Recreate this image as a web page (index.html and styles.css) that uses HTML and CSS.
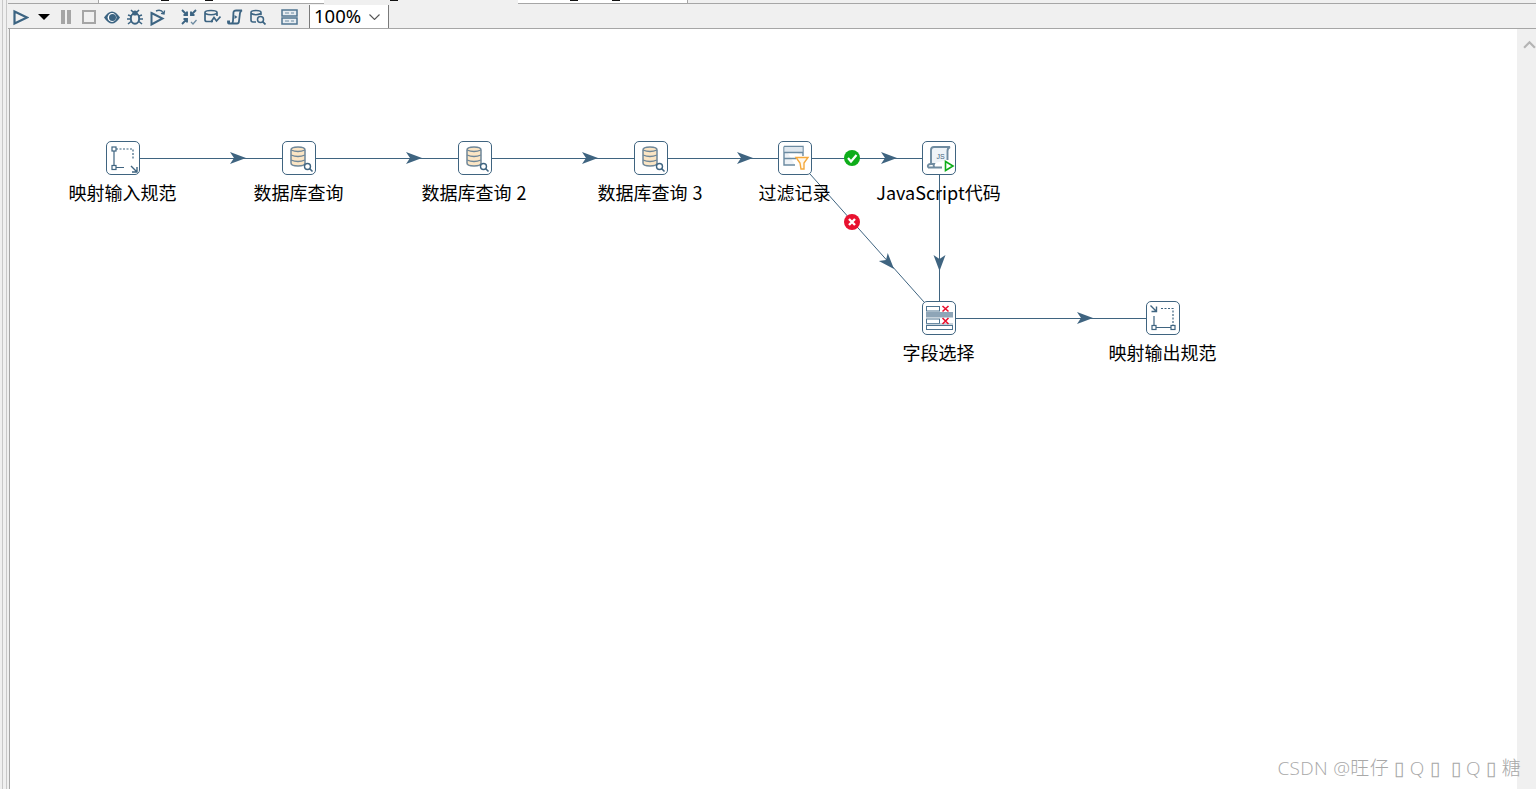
FILE: index.html
```html
<!DOCTYPE html>
<html lang="en">

<head>
    <meta charset="UTF-8">
    <title>Transformation</title>
    <link rel="stylesheet" href="styles.css">
</head>

<body>
    <div class="gutter"></div>

    <div class="workspace">
        <div class="tabstrip">
            <div class="tab-a"></div>
            <div class="tab-b"><span class="mark mark1"></span><span class="mark mark2"></span></div>
            <div class="tab-c"><span class="mark mark3"></span></div>
            <div class="tab-d"><span class="mark mark4"></span><span class="mark mark5"></span></div>
            <div class="tab-e"></div>
        </div>

        <div class="toolbar">
            <svg class="tb-run" viewBox="0 0 17 17"><path d="M2.500 2.500 L15 8.500 L2.500 14.500 Z" fill="none" stroke="#3c6482" stroke-width="2.200"/></svg>
            <svg class="tb-drop" viewBox="0 0 12 6"><path d="M0 0 H12 L6 6 Z" fill="#000"/></svg>
            <svg class="tb-pause" viewBox="0 0 12 14"><path d="M1 0 H5 V14 H1 Z M7 0 H11 V14 H7 Z" fill="#a5a5a5"/></svg>
            <svg class="tb-stop" viewBox="0 0 14 14"><rect x="1" y="1" width="12" height="12" fill="none" stroke="#a5a5a5" stroke-width="2"/></svg>
            <svg class="tb-eye" viewBox="0 0 16 13"><path d="M0 6.500 Q8 -5.500 16 6.500 Q8 18.500 0 6.500 Z" fill="#3c6482"/><circle cx="8" cy="6.500" r="4.400" fill="#fff"/><circle cx="8.500" cy="6.500" r="3.500" fill="#3c6482"/></svg>
            <svg class="tb-bug" viewBox="0 0 16 16"><ellipse cx="8" cy="9.500" rx="4.200" ry="5.200" fill="none" stroke="#3c6482" stroke-width="2"/><circle cx="8" cy="4" r="2.600" fill="#3c6482"/><path d="M4 1 L6 3 M12 1 L10 3 M1 6 L4 7 M15 6 L12 7 M0 10 H4 M16 10 H12 M1 15 L4 12.500 M15 15 L12 12.500" stroke="#3c6482" stroke-width="1.600" fill="none"/></svg>
            <svg class="tb-replay" viewBox="0 0 16 17"><path d="M1.500 4 L12.500 9.500 L1.500 15.500 Z" fill="none" stroke="#3c6482" stroke-width="2"/><path d="M6 2 Q11 0 13.500 4 M14.500 1.500 L14 5 L11 4.400" fill="none" stroke="#3c6482" stroke-width="1.400"/></svg>
            <svg class="tb-verify" viewBox="0 0 16 16"><path d="M1 1 L6 6 M6 2.500 V6 H2.500 M15 1 L10 6 M10 2.500 V6 H13.500 M1 15 L6 10 M6 13.500 V10 H2.500" fill="none" stroke="#3c6482" stroke-width="1.900"/><path d="M10 13 L12 15 L15.500 11" fill="none" stroke="#6d8ba1" stroke-width="1.300"/></svg>
            <svg class="tb-impact" viewBox="0 0 17 16"><path d="M9 12.500 H3 Q1 12.500 1 11 V3.500 Q1 1.500 7 1.500 Q13 1.500 13 3.500 V7 M1 4.500 Q7 7 13 4.500" fill="none" stroke="#3c6482" stroke-width="1.700"/><path d="M7 13 L10 8.500 L12.500 12 L16.500 7.500" fill="none" stroke="#3c6482" stroke-width="1.700"/></svg>
            <svg class="tb-sql" viewBox="0 0 16 16"><path d="M4.500 14.500 H2 Q0.800 14.500 1 12.500 H3 M4.500 14.500 Q6 14 6 12 L6.500 3 Q7 1.500 9 1.500 H15 Q13.500 2 13 4 L12 12 Q12 14.500 10 14.500 Z" fill="none" stroke="#3c6482" stroke-width="1.800"/><path d="M7.500 6 L10.500 8 L7.500 10 Z" fill="#3c6482"/></svg>
            <svg class="tb-explore" viewBox="0 0 16 16"><path d="M6 13 H3 Q1 13 1 11 V3.500 Q1 1.500 6 1.500 Q11 1.500 11 3.500 V6 M1 4.500 Q6 7 11 4.500" fill="none" stroke="#3c6482" stroke-width="1.600"/><circle cx="10.500" cy="10.500" r="3" fill="none" stroke="#3c6482" stroke-width="1.500"/><path d="M12.600 12.600 L15.500 15.500" stroke="#3c6482" stroke-width="1.800"/></svg>
            <svg class="tb-grid" viewBox="0 0 17 16"><rect x="1" y="1" width="15" height="6" fill="#e6ecf1" stroke="#4f7490" stroke-width="1.500"/><rect x="1" y="9" width="15" height="6" fill="#e6ecf1" stroke="#4f7490" stroke-width="1.500"/><path d="M4 4 H8 M10 4 H13 M4 12 H8 M10 12 H13" stroke="#6d8ba1"/></svg>
            <div class="zoom-box">
                <span class="zoom-val">100%</span>
                <svg class="zoom-arrow" viewBox="0 0 11 6"><path d="M0.500 0.500 L5.500 5.500 L10.500 0.500" fill="none" stroke="#555" stroke-width="1.100"/></svg>
            </div>
        </div>

        <div class="main">
            <div class="canvas">
                <svg class="edges" viewBox="0 0 1507 760">
                    <defs>
                        <path id="arrow" d="M-16 -6 L0 0 L-16 6 L-12 0 Z" fill="#3f6480"/>
                        <g id="dbicon">
                            <path d="M8 8 Q8 5 15 5 Q22 5 22 8 V21 Q22 24 15 24 Q8 24 8 21 Z" fill="#fbe5c4" stroke="#6f8799" stroke-width="1.500"/>
                            <path d="M8 8 Q15 11 22 8 M8 13 Q15 16 22 13 M8 18 Q15 21 22 18" fill="none" stroke="#6f8799" stroke-width="1.300"/>
                            <circle cx="24.500" cy="24.500" r="3" fill="#fff" stroke="#3f6480" stroke-width="1.400"/>
                            <path d="M26.500 26.500 L29.500 29.500" stroke="#3f6480" stroke-width="1.600"/>
                        </g>
                    </defs>
                    <g class="edge">
                        <path d="M130 129 H770"/>
                        <path d="M802 129 H929.500 V289"/>
                        <path d="M800 145 L914 273" class="thin"/>
                        <path d="M929.500 289 H1140"/>
                    </g>
                    <use href="#arrow" transform="translate(236 129)"/>
                    <use href="#arrow" transform="translate(412 129)"/>
                    <use href="#arrow" transform="translate(588 129)"/>
                    <use href="#arrow" transform="translate(743 129)"/>
                    <use href="#arrow" transform="translate(887 129)"/>
                    <use href="#arrow" transform="translate(929.500 242) rotate(90)"/>
                    <use href="#arrow" transform="translate(884 240) rotate(48)"/>
                    <use href="#arrow" transform="translate(1083 289)"/>

                    <circle cx="842" cy="129" r="8" fill="#0ead1a"/>
                    <path d="M838 129 L841 132.500 L846.500 126" fill="none" stroke="#fff" stroke-width="2.200"/>
                    <circle cx="842" cy="193" r="8" fill="#e8112f"/>
                    <path d="M839 190 L845 196 M845 190 L839 196" fill="none" stroke="#fff" stroke-width="2.400"/>
                </svg>

                <div class="node node-in">
                    <svg viewBox="0 0 32 32"><path d="M7 9 V25 M9 25.500 H17" stroke="#3f6480" stroke-width="1.200" fill="none"/><path d="M9 7 H26 V18" stroke="#3f6480" stroke-width="1.200" stroke-dasharray="2 1.500" fill="none"/><rect x="5" y="5" width="4" height="4" fill="#fff" stroke="#3f6480" stroke-width="1.200"/><rect x="5" y="23.500" width="4" height="4" fill="#fff" stroke="#3f6480" stroke-width="1.200"/><path d="M24 24 L30 30 M30 25 V30 H25" fill="none" stroke="#3f6480" stroke-width="1.400"/></svg>
                </div>
                <div class="label label-in">映射输入规范</div>

                <div class="node node-db1">
                    <svg viewBox="0 0 32 32"><use href="#dbicon"/></svg>
                </div>
                <div class="label label-db1">数据库查询</div>

                <div class="node node-db2">
                    <svg viewBox="0 0 32 32"><use href="#dbicon"/></svg>
                </div>
                <div class="label label-db2">数据库查询 2</div>

                <div class="node node-db3">
                    <svg viewBox="0 0 32 32"><use href="#dbicon"/></svg>
                </div>
                <div class="label label-db3">数据库查询 3</div>

                <div class="node node-filter">
                    <svg viewBox="0 0 32 32"><path d="M5 4.500 H24 V14 M5 4.500 V23 H16" fill="#eef2f6" stroke="#6b8aa1" stroke-width="1.400"/><path d="M5.500 5 H23.500 V10 H5.500 Z" fill="#dfe7ee"/><path d="M5 10.500 H24 M5 16.500 H17" stroke="#6b8aa1" stroke-width="1.400"/><path d="M17 15.500 H29 L25 21 V27 H22 L21 21 Z" fill="#fff8ec" stroke="#f5a93c" stroke-width="1.400"/></svg>
                </div>
                <div class="label label-filter">过滤记录</div>

                <div class="node node-js">
                    <svg viewBox="0 0 32 32"><path d="M8 22 V8 Q8 5 11 5 H27 Q24.500 6 24.500 9 V18" fill="#eef3f7" stroke="#6f8ba0" stroke-width="1.900"/><path d="M5 25.500 Q4 22 8 22 H11 Q10 24 11.500 25.500 H19 M5 25.500 H11.500" fill="#fff" stroke="#6f8ba0" stroke-width="1.900"/><text x="13.500" y="17" class="js-text">JS</text><path d="M22.500 19.500 L30 24 L22.500 28.500 Z" fill="#fff" stroke="#0ead1a" stroke-width="1.600"/></svg>
                </div>
                <div class="label label-js">JavaScript代码</div>

                <div class="node node-select">
                    <svg viewBox="0 0 32 32"><rect x="3.500" y="4.500" width="13" height="4.500" fill="#fff" stroke="#4f7490"/><rect x="3" y="10" width="27" height="5.500" fill="#8ea5b7"/><rect x="3.500" y="17" width="13" height="4.500" fill="#fff" stroke="#4f7490"/><rect x="3" y="21.500" width="27" height="1" fill="#8ea5b7"/><rect x="3.500" y="23.500" width="26" height="4" fill="#fff" stroke="#4f7490"/><path d="M19.500 4 L25.500 9.500 M25.500 4 L19.500 9.500 M19.500 16 L25.500 22 M25.500 16 L19.500 22" stroke="#e8112f" stroke-width="1.600"/></svg>
                </div>
                <div class="label label-select">字段选择</div>

                <div class="node node-out">
                    <svg viewBox="0 0 32 32"><path d="M7 14 V24 M9 25.500 H24" stroke="#3f6480" stroke-width="1.200" fill="none"/><path d="M14 6.500 H26 V23" stroke="#3f6480" stroke-width="1.200" stroke-dasharray="2 1.500" fill="none"/><rect x="5" y="23.500" width="4" height="4" fill="#fff" stroke="#3f6480" stroke-width="1.200"/><rect x="24" y="23.500" width="4" height="4" fill="#fff" stroke="#3f6480" stroke-width="1.200"/><path d="M3.500 3.500 L9.500 9.500 M9.500 4.500 V9.500 H4.500" fill="none" stroke="#3f6480" stroke-width="1.400"/></svg>
                </div>
                <div class="label label-out">映射输出规范</div>
            </div>
            <div class="scrollbar">
                <svg class="scroll-up" viewBox="0 0 12 8"><path d="M1 7 L6 2 L11 7" fill="none" stroke="#b4b4b4" stroke-width="2"/></svg>
            </div>
        </div>
    </div>

    <div class="watermark">CSDN @旺仔 ▯ Q ▯ &nbsp;▯ Q ▯ 糖</div>
</body>

</html>
```

FILE: styles.css
```css
html,
body {
    margin: 0;
    height: 100%;
    overflow: hidden;
}

body {
    display: flex;
    background: #f0f0f0;
    font-family: "Noto Sans CJK SC", "Liberation Sans", sans-serif;
    position: relative;
}

.gutter {
    width: 8px;
    flex: none;
    background: linear-gradient(to right, #f0f0f0 0 2px, #c8c8c8 2px 3px, #f0f0f0 3px 6px, #c8c8c8 6px 7px, #f0f0f0 7px);
}

.workspace {
    flex: 1;
    min-width: 0;
    display: flex;
    flex-direction: column;
}

.tabstrip {
    display: flex;
    height: 4px;
    flex: none;
}

.tab-a {
    width: 90px;
    border-bottom: 1px solid #a6a6a6;
}

.tab-b {
    width: 225px;
    background: #fff;
    border-left: 1px solid #a6a6a6;
    border-bottom: 1px solid #a6a6a6;
    position: relative;
}

.tab-c {
    width: 194px;
    position: relative;
}

.tab-d {
    width: 169px;
    background: #fff;
    border-bottom: 1px solid #a6a6a6;
    border-right: 1px solid #a6a6a6;
    position: relative;
}

.tab-e {
    flex: 1;
    border-bottom: 1px solid #a6a6a6;
}

.mark {
    position: absolute;
    top: 0;
    width: 8px;
    height: 1px;
    background: #111;
}

.mark1 { left: 62px; }
.mark2 { left: 106px; }
.mark3 { left: 66px; }
.mark4 { left: 52px; }
.mark5 { left: 94px; }

.toolbar {
    box-sizing: border-box;
    height: 25px;
    flex: none;
    padding-top: 2px;
    display: flex;
    align-items: center;
    background: #f0f0f0;
    border-bottom: 1px solid #a6a6a6;
}

.toolbar svg {
    flex: none;
}

.tb-run { margin-left: 4px; width: 17px; height: 17px; }
.tb-drop { margin-left: 9px; width: 12px; height: 6px; }
.tb-pause { margin-left: 10px; width: 12px; height: 14px; }
.tb-stop { margin-left: 10px; width: 14px; height: 14px; }
.tb-eye { margin-left: 8px; width: 16px; height: 13px; }
.tb-bug { margin-left: 7px; width: 16px; height: 16px; }
.tb-replay { margin-left: 7px; width: 16px; height: 17px; }
.tb-verify { margin-left: 15px; width: 16px; height: 16px; }
.tb-impact { margin-left: 7px; width: 17px; height: 16px; }
.tb-sql { margin-left: 6px; width: 16px; height: 16px; }
.tb-explore { margin-left: 7px; width: 16px; height: 16px; }
.tb-grid { margin-left: 15px; width: 17px; height: 16px; }

.zoom-box {
    box-sizing: border-box;
    margin-left: 11px;
    width: 80px;
    height: 23px;
    align-self: flex-end;
    display: flex;
    align-items: center;
    padding-left: 4px;
    background: #fff;
    border-left: 1px solid #7a7a7a;
    border-right: 1px solid #7a7a7a;
}

.zoom-val {
    width: 55px;
    margin-top: -2px;
    font-family: "Noto Sans", sans-serif;
    font-size: 18.5px;
    line-height: 22px;
    color: #000;
}

.zoom-arrow {
    width: 11px;
    height: 6px;
}

.main {
    flex: 1;
    display: flex;
    min-height: 0;
}

.canvas {
    flex: 1;
    margin-left: 1px;
    border-left: 1px solid #a6a6a6;
    position: relative;
    background: #fff;
}

.edges {
    position: absolute;
    left: 0;
    top: 0;
    width: 1507px;
    height: 760px;
}

.edge path {
    fill: none;
    stroke: #3f6480;
    stroke-width: 1;
    shape-rendering: crispEdges;
}

.edge .thin {
    shape-rendering: auto;
}

.node {
    position: absolute;
    width: 32px;
    height: 32px;
    background: #fff;
    border: 1px solid #3f6480;
    border-radius: 5px;
}

.node svg {
    display: block;
    width: 32px;
    height: 32px;
}

.js-text {
    font-family: "Liberation Sans", sans-serif;
    font-size: 7px;
    fill: #3f6480;
}

.label {
    position: absolute;
    font-size: 18px;
    line-height: 24px;
    color: #000;
    white-space: nowrap;
    word-spacing: 1px;
    transform: translateX(-50%);
}

.node-in { left: 96px; top: 112px; }
.node-db1 { left: 272px; top: 112px; }
.node-db2 { left: 448px; top: 112px; }
.node-db3 { left: 624px; top: 112px; }
.node-filter { left: 768px; top: 112px; }
.node-js { left: 912px; top: 112px; }
.node-select { left: 912px; top: 272px; }
.node-out { left: 1136px; top: 272px; }

.label-in { left: 112.500px; top: 151px; }
.label-db1 { left: 288.500px; top: 151px; }
.label-db2 { left: 464px; top: 151px; }
.label-db3 { left: 640px; top: 151px; }
.label-filter { left: 784.500px; top: 151px; }
.label-js { left: 928.500px; top: 151px; }
.label-select { left: 928.500px; top: 311px; }
.label-out { left: 1152.500px; top: 311px; }

.scrollbar {
    width: 19px;
    flex: none;
    background: #f0f0f0;
    position: relative;
}

.scroll-up {
    position: absolute;
    left: 6px;
    top: 11px;
    width: 13px;
    height: 9px;
}

.watermark {
    position: absolute;
    right: 15px;
    bottom: 8px;
    font-family: "Open Sans", "Noto Sans CJK SC", "DejaVu Sans", sans-serif;
    font-size: 19px;
    font-weight: 300;
    letter-spacing: 0.300px;
    line-height: 26px;
    color: #a8a8a8;
    white-space: nowrap;
}
```
